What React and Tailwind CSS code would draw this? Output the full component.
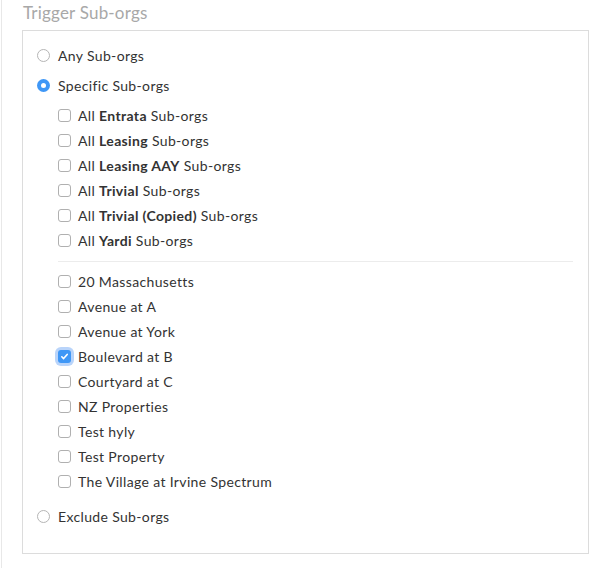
import { useState } from 'react'

const GROUPS = ['Entrata', 'Leasing', 'Leasing AAY', 'Trivial', 'Trivial (Copied)', 'Yardi']

const SUBORGS = [
  '20 Massachusetts',
  'Avenue at A',
  'Avenue at York',
  'Boulevard at B',
  'Courtyard at C',
  'NZ Properties',
  'Test hyly',
  'Test Property',
  'The Village at Irvine Spectrum'
]

function Radio({ checked }) {
  if (checked) {
    return (
      <span className="w-[13px] h-[13px] rounded-full bg-[#3f97f6] flex items-center justify-center flex-shrink-0">
        <span className="w-[5px] h-[5px] rounded-full bg-white" />
      </span>
    )
  }
  return <span className="w-[13px] h-[13px] rounded-full border border-[#b5b5b5] bg-white flex-shrink-0" />
}

function Checkbox({ checked }) {
  if (checked) {
    return (
      <span className="w-[13px] h-[13px] rounded-[3px] bg-[#3f97f6] shadow-[0_0_0_3px_rgba(100,160,245,0.45)] flex items-center justify-center flex-shrink-0">
        <svg className="w-[9px] h-[9px]" viewBox="0 0 10 10" fill="none" stroke="white" strokeWidth={1.8} strokeLinecap="round" strokeLinejoin="round">
          <path d="M2 5.3l2 2 4-4.6" />
        </svg>
      </span>
    )
  }
  return <span className="w-[13px] h-[13px] rounded-[3px] border border-[#b0b0b0] bg-white flex-shrink-0" />
}

export default function App() {
  const [mode] = useState('specific')
  const [picked] = useState(['Boulevard at B'])

  return (
    <div className="h-[568px] bg-white font-['Lato',sans-serif] text-[14px] tracking-[0.35px] text-[#333] border-l border-[#e8e8e8] ml-[1px] pl-[20px] pr-[17px]">
      <div className="pt-[2px] pl-[1px] text-[17px] leading-[22px] tracking-[0.2px] text-[#a8a8a8]">Trigger Sub-orgs</div>

      <div className="mt-[6px] border border-[#dcdcdc] pl-[14px] pr-[15px] pt-[12px] pb-[24px] flex flex-col">
        <label className="h-[25px] flex items-center gap-[8px]">
          <Radio checked={mode === 'any'} />
          <span>Any Sub-orgs</span>
        </label>
        <label className="mt-[5px] h-[25px] flex items-center gap-[8px]">
          <Radio checked={mode === 'specific'} />
          <span>Specific Sub-orgs</span>
        </label>

        <div className="mt-[5px] pl-[21px] flex flex-col">
          {GROUPS.map((g) => (
            <label key={g} className="h-[25px] flex items-center gap-[7px]">
              <Checkbox checked={false} />
              <span>
                All <span className="font-bold">{g}</span> Sub-orgs
              </span>
            </label>
          ))}

          <div className="mt-[8px] mb-[7px] border-t border-[#ececec]" />

          {SUBORGS.map((s) => (
            <label key={s} className="h-[25px] flex items-center gap-[7px]">
              <Checkbox checked={picked.includes(s)} />
              <span>{s}</span>
            </label>
          ))}
        </div>

        <label className="mt-[10px] h-[25px] flex items-center gap-[8px]">
          <Radio checked={mode === 'exclude'} />
          <span>Exclude Sub-orgs</span>
        </label>
      </div>
    </div>
  )
}
